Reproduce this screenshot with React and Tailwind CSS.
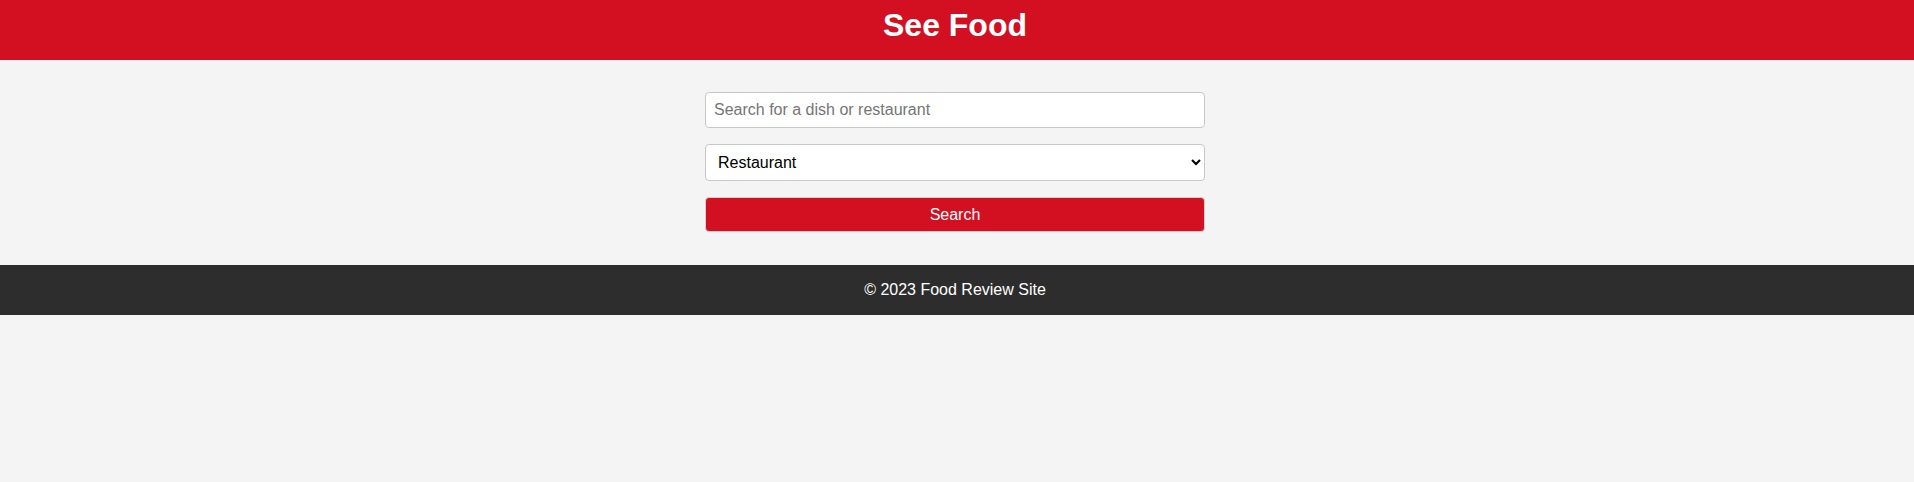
export default function App() {
  return (
    <div className="min-h-[482px] bg-[#f4f4f4] text-black" style={{ fontFamily: '"Liberation Sans", Arial, Helvetica, sans-serif' }}>
      <header className="h-[60px] bg-[#d21022] flex justify-center pt-[7px] pr-[4px]">
        <h1 className="text-[32px] leading-[37px] font-bold text-white">See Food</h1>
      </header>
      <main className="flex justify-center pt-[32px] pb-[33px] pr-[4px]">
        <form className="w-[500px] flex flex-col gap-[16px]" onSubmit={(e) => e.preventDefault()}>
          <input
            type="text"
            placeholder="Search for a dish or restaurant"
            className="box-border h-[36px] w-full rounded-[4px] border border-[#c8c8c8] bg-white px-[8px] text-[16px] text-black placeholder:text-[#757575] outline-none"
          />
          <select
            defaultValue="restaurant"
            className="box-border h-[37px] w-full rounded-[4px] border border-[#c8c8c8] bg-white px-[8px] text-[16px] text-black outline-none appearance-auto"
          >
            <option value="restaurant">Restaurant</option>
            <option value="dish">Dish</option>
          </select>
          <button
            type="submit"
            className="box-border h-[35px] w-full rounded-[4px] border border-[#cfcfcf] bg-[#d21022] text-[16px] text-white"
          >
            Search
          </button>
        </form>
      </main>
      <footer className="h-[50px] bg-[#2d2d2d] flex items-center justify-center pr-[4px] text-white text-[16px]">
        © 2023 Food Review Site
      </footer>
    </div>
  );
}
